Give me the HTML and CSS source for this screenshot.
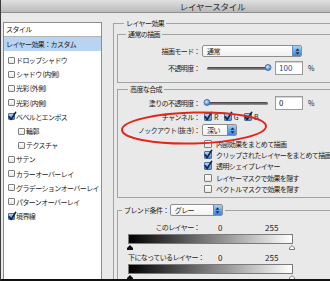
FILE: index.html
```html
<!DOCTYPE html>
<html lang="ja">
<head>
  <meta charset="UTF-8">
  <title>レイヤースタイル</title>
  <link rel="stylesheet" href="styles.css">
</head>
<body>
<div class="dialog">
  <div class="titlebar">レイヤースタイル</div>
  <div class="main">
    <div class="styles">
      <div class="styles-head">スタイル</div>
      <div class="styles-current">レイヤー効果：カスタム</div>
      <ul class="styles-list">
        <li><span class="cb"></span>ドロップシャドウ</li>
        <li><span class="cb"></span>シャドウ (内側)</li>
        <li><span class="cb"></span>光彩 (外側)</li>
        <li><span class="cb"></span>光彩 (内側)</li>
        <li><span class="cb on"><svg viewBox="0 0 8 8"><path d="M1.2 3.8 L3.2 6.4 L7.6 -0.6"/></svg></span>ベベルとエンボス</li>
        <li class="sub"><span class="cb"></span>輪郭</li>
        <li class="sub"><span class="cb"></span>テクスチャ</li>
        <li><span class="cb"></span>サテン</li>
        <li><span class="cb"></span>カラーオーバーレイ</li>
        <li><span class="cb"></span>グラデーションオーバーレイ</li>
        <li><span class="cb"></span>パターンオーバーレイ</li>
        <li><span class="cb on"><svg viewBox="0 0 8 8"><path d="M1.2 3.8 L3.2 6.4 L7.6 -0.6"/></svg></span>境界線</li>
      </ul>
    </div>

    <div class="panel">
      <fieldset class="group outer">
        <legend class="l-outer">レイヤー効果</legend>

        <fieldset class="group general">
          <legend class="l-general">通常の描画</legend>
          <div class="form">
            <span class="lbl">描画モード：</span>
            <div class="select w-mode">通常<span class="arrows"><svg viewBox="0 0 6 8"><path d="M3 0.5 L5.5 3.2 H0.5 Z M3 7.5 L5.5 4.8 H0.5 Z"/></svg></span></div>
            <span class="lbl">不透明度：</span>
            <div class="slider-row">
              <span class="slider"><span class="thumb" style="left: 100%"></span></span>
              <span class="field blue">100</span><span class="pct">%</span>
            </div>
          </div>
        </fieldset>

        <fieldset class="group advanced">
          <legend class="l-advanced">高度な合成</legend>
          <div class="form tight">
            <span class="lbl">塗りの不透明度：</span>
            <div class="slider-row">
              <span class="slider"><span class="thumb" style="left: 0%"></span></span>
              <span class="field">0</span><span class="pct">%</span>
            </div>
            <span class="lbl">チャンネル：</span>
            <div class="channels">
              <span class="ch"><span class="cb on"><svg viewBox="0 0 8 8"><path d="M1.2 3.8 L3.2 6.4 L7.6 -0.6"/></svg></span>R</span>
              <span class="ch"><span class="cb on"><svg viewBox="0 0 8 8"><path d="M1.2 3.8 L3.2 6.4 L7.6 -0.6"/></svg></span>G</span>
              <span class="ch"><span class="cb on"><svg viewBox="0 0 8 8"><path d="M1.2 3.8 L3.2 6.4 L7.6 -0.6"/></svg></span>B</span>
            </div>
            <span class="lbl">ノックアウト (抜き)：</span>
            <div class="select w-knock">深い<span class="arrows"><svg viewBox="0 0 6 8"><path d="M3 0.5 L5.5 3.2 H0.5 Z M3 7.5 L5.5 4.8 H0.5 Z"/></svg></span></div>
            <ul class="checks">
              <li><span class="cb"></span>内部効果をまとめて描画</li>
              <li><span class="cb on"><svg viewBox="0 0 8 8"><path d="M1.2 3.8 L3.2 6.4 L7.6 -0.6"/></svg></span>クリップされたレイヤーをまとめて描画</li>
              <li><span class="cb on"><svg viewBox="0 0 8 8"><path d="M1.2 3.8 L3.2 6.4 L7.6 -0.6"/></svg></span>透明シェイプレイヤー</li>
              <li><span class="cb"></span>レイヤーマスクで効果を隠す</li>
              <li><span class="cb"></span>ベクトルマスクで効果を隠す</li>
            </ul>
          </div>
        </fieldset>

        <fieldset class="group blend">
          <legend class="l-blend">ブレンド条件：<span class="select w-gray">グレー<span class="arrows"><svg viewBox="0 0 6 8"><path d="M3 0.5 L5.5 3.2 H0.5 Z M3 7.5 L5.5 4.8 H0.5 Z"/></svg></span></span></legend>
          <div class="blend-body">
            <div class="range-row"><span class="rlbl">このレイヤー：</span><span class="rmin">0</span><span class="rmax">255</span></div>
            <div class="ramp"></div>
            <div class="ticks">
              <svg class="tick" viewBox="0 0 6 5"><path d="M3 0 L6 3 V5 H0 V3 Z" fill="#111"/></svg>
              <svg class="tick" viewBox="0 0 6 5"><path d="M3 0.5 L5.5 3 V4.5 H0.5 V3 Z" fill="#fff" stroke="#777"/></svg>
            </div>
            <div class="range-row"><span class="rlbl">下になっているレイヤー：</span><span class="rmin">0</span><span class="rmax">255</span></div>
            <div class="ramp"></div>
            <div class="ticks">
              <svg class="tick" viewBox="0 0 6 5"><path d="M3 0 L6 3 V5 H0 V3 Z" fill="#111"/></svg>
              <svg class="tick" viewBox="0 0 6 5"><path d="M3 0.5 L5.5 3 V4.5 H0.5 V3 Z" fill="#fff" stroke="#777"/></svg>
            </div>
          </div>
        </fieldset>
      </fieldset>
    </div>
  </div>

  <svg class="mark" width="330" height="281" viewBox="0 0 330 281">
    <ellipse cx="193" cy="128" rx="72" ry="15.5" transform="rotate(-1.5 193 128)"/>
  </svg>
</div>
</body>
</html>
```

FILE: styles.css
```css
* { box-sizing: border-box; }
html, body { margin:0; padding:0; overflow:hidden; }
body { font-family: "Noto Sans CJK JP", "Noto Sans", sans-serif; font-size:7px; letter-spacing:-0.6px; color:#1b1b1b; background:#e9e9e9; }

.dialog { position:relative; width:330px; height:281px; background:#e9e9e9; border-left:1px solid #3c3c3c; border-bottom:2px solid #111; overflow:hidden; }
.titlebar { height:13px; line-height:12px; padding-left:94px; text-align:center; font-size:8.5px; letter-spacing:-0.2px; color:#2b2b2b; background:linear-gradient(#e0e0e0, #bababa); border-bottom:1px solid #8e8e8e; }
.main { display:flex; gap:11px; padding:9px 0 0 2px; }

/* styles list */
.styles { flex:0 0 99px; height:262px; background:#fff; border:1px solid #8c8c8c; }
.styles-head { height:14px; line-height:13px; padding-left:2px; border-bottom:1px solid #b4b4b4; }
.styles-current { height:14px; line-height:14px; padding-left:2px; background:#b8d4f2; }
.styles-list { list-style:none; margin:0; padding:2px 0 0; }
.styles-list li { display:flex; align-items:center; gap:1px; height:14.2px; padding-left:4px; white-space:nowrap; }
.styles-list li.sub { padding-left:14px; }
.styles-list .cb { width:7px; height:7px; }

/* checkboxes */
.cb { position:relative; display:inline-block; flex:none; width:8px; height:8px; background:linear-gradient(#fff, #e6e6e6); border:1px solid #7e7e7e; border-radius:1px; }
.cb.on { background:linear-gradient(#b4d5f7, #4a8ddc); border-color:#4d6f9d; }
.cb svg { position:absolute; left:-1px; top:-1px; width:8px; height:8px; overflow:visible; }
.cb svg path { fill:none; stroke:#0f2245; stroke-width:1.7; stroke-linecap:round; stroke-linejoin:round; }

/* right panel */
.panel { flex:0 0 250px; margin-top:-3px; }
fieldset { margin:0; padding:0; min-width:0; border:1px solid #a2a2a2; }
legend { padding:0 2px; line-height:9px; }
.outer { padding:2px 0 0 3px; border-bottom:none; height:300px; }
.l-outer { margin-left:7px; }
.l-general { margin-left:8px; }
.l-advanced { margin-left:10px; }
.l-blend { margin-left:4px; display:flex; align-items:center; line-height:12px; }

.general { padding:6px 0 7px; }
.advanced { margin-top:2px; padding:2px 0 3px; }
.blend { margin-top:6px; }

.form { display:grid; grid-template-columns:82px auto; column-gap:2px; row-gap:4px; align-items:center; }
.form.tight { row-gap:2px; }
.lbl { text-align:right; white-space:nowrap; }

.select { display:inline-flex; align-items:center; height:12px; padding-left:4px; background:linear-gradient(#fff, #f1f1f1); border:1px solid #8d8d8d; border-radius:2px; white-space:nowrap; }
.arrows { display:flex; align-items:center; justify-content:center; margin-left:auto; width:9px; height:10px; background:linear-gradient(#a6d0f7, #3a82da); border-left:1px solid #6a8cbc; border-radius:0 1px 1px 0; }
.arrows svg { width:5px; height:7px; }
.arrows path { fill:#142446; }
.w-mode { width:100px; }
.w-knock { width:35px; }
.w-gray { width:53px; margin-left:1px; }

.slider-row { display:flex; align-items:center; height:14px; }
.slider { position:relative; width:61px; height:3px; margin-left:5px; background:linear-gradient(#3e3e3e, #9a9a9a); border-radius:2px; }
.thumb { position:absolute; top:-3px; width:7px; height:7px; transform:translateX(-50%); background:radial-gradient(circle at 40% 35%, #d6ecff, #3f8ae0 70%); border:1px solid #456fa6; border-radius:50%; }
.field { width:28px; height:14px; margin-left:7px; padding-left:3px; line-height:12px; font-size:8px; letter-spacing:0; background:#fff; border:1px solid #9b9b9b; box-shadow:inset 0 1px 1px rgba(0,0,0,.18); }
.field.blue { color:#1d4b98; }
.pct { margin-left:5px; }

.channels { display:flex; align-items:center; gap:6px; height:10px; padding-left:2px; }
.ch { display:flex; align-items:center; gap:2px; }

.checks { grid-column:2; list-style:none; margin:0; padding:0 0 0 2px; }
.checks li { display:flex; align-items:center; gap:4px; height:11.3px; white-space:nowrap; }

/* blend if */
.blend-body { padding:6px 0 0 10px; }
.range-row { display:flex; align-items:center; height:10px; }
.rlbl { width:72px; text-align:right; white-space:nowrap; }
.rmin { width:65px; padding-left:18px; font-size:8px; letter-spacing:0; }
.rmax { font-size:8px; letter-spacing:0; }
.range-row + .ramp { margin-top:2px; }
.ticks + .range-row { margin-top:2px; }
.ramp { width:165px; height:10px; background:linear-gradient(to right, #000, #fff); border:1px solid #7a7a7a; }
.ticks { display:flex; justify-content:space-between; width:168px; height:5px; margin:1px 0 0 -1px; }
.tick { width:6px; height:5px; }

/* annotation */
.mark { position:absolute; left:0; top:0; pointer-events:none; }
.mark ellipse { fill:none; stroke:#e1261c; stroke-width:2; }
```
